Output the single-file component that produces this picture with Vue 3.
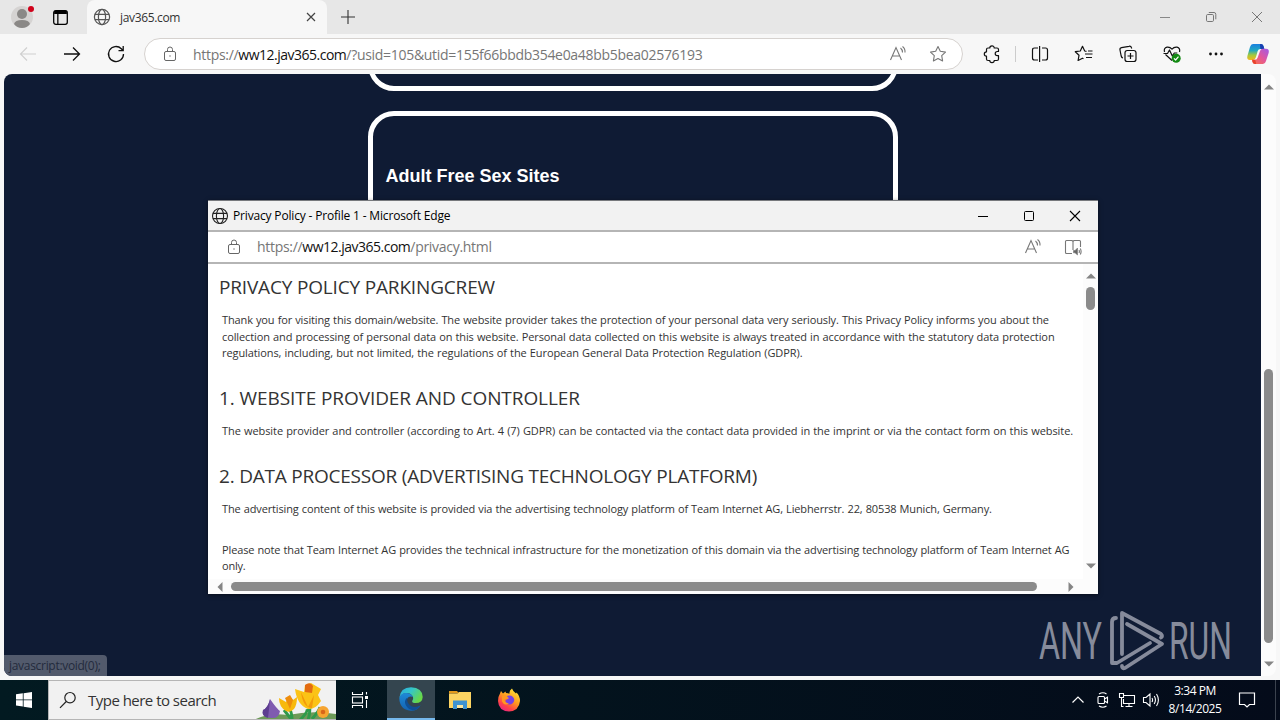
<script setup>
import { ref } from 'vue';

const tabTitle = ref('jav365.com');
const popupTitle = ref('Privacy Policy - Profile 1 - Microsoft Edge');

const adresse = { scheme: 'https://', host: 'ww12.jav365.com' };
const pagePath = '/?usid=105&utid=155f66bbdb354e0a48bb5bea02576193';
const popupPath = '/privacy.html';

// ls = letter spacing of the line, in px
const sections = [
  {
    title: 'PRIVACY POLICY PARKINGCREW',
    ls: -0.17,
    paragraphs: [
      [
        { text: 'Thank you for visiting this domain/website. The website provider takes the protection of your personal data very seriously. This Privacy Policy informs you about the', ls: -0.12 },
        { text: 'collection and processing of personal data on this website. Personal data collected on this website is always treated in accordance with the statutory data protection', ls: -0.1 },
        { text: 'regulations, including, but not limited, the regulations of the European General Data Protection Regulation (GDPR).', ls: -0.09 }
      ]
    ]
  },
  {
    title: '1. WEBSITE PROVIDER AND CONTROLLER',
    ls: -0.08,
    paragraphs: [
      [
        { text: 'The website provider and controller (according to Art. 4 (7) GDPR) can be contacted via the contact data provided in the imprint or via the contact form on this website.', ls: -0.07 }
      ]
    ]
  },
  {
    title: '2. DATA PROCESSOR (ADVERTISING TECHNOLOGY PLATFORM)',
    ls: -0.22,
    paragraphs: [
      [
        { text: 'The advertising content of this website is provided via the advertising technology platform of Team Internet AG, Liebherrstr. 22, 80538 Munich, Germany.', ls: -0.132 }
      ],
      [
        { text: 'Please note that Team Internet AG provides the technical infrastructure for the monetization of this domain via the advertising technology platform of Team Internet AG', ls: -0.13 },
        { text: 'only.', ls: -0.2 }
      ]
    ]
  }
];
</script>

<template>
  <div class="desktop">
    <!-- Tab strip -->
    <header class="tabstrip">
      <svg class="avatar" width="26" height="26" viewBox="0 0 26 26">
        <circle cx="13" cy="14" r="11" fill="#d5d3d2" />
        <circle cx="13" cy="11" r="5" fill="#8a8886" />
        <path d="M5 21q1-4 8-4t8 4q-3 4-8 4t-8-4z" fill="#8a8886" />
        <circle cx="22" cy="6" r="3" fill="#d0021b" />
      </svg>
      <svg class="workspaces" width="17" height="17" viewBox="0 0 16 16" fill="none" stroke="#000">
        <rect x="1.6" y="1.6" width="12.8" height="12.8" rx="2" stroke-width="1.2" />
        <path d="M2 3.2h12" stroke-width="3" />
        <path d="M5.5 4v10" stroke-width="1.2" />
      </svg>
      <div class="tab">
        <svg width="18" height="18" viewBox="0 0 18 18" fill="none" stroke="#555" stroke-width="1.2">
          <circle cx="9" cy="9" r="7.6" />
          <ellipse cx="9" cy="9" rx="3.6" ry="7.6" />
          <path d="M2 6.4h14M2 11.6h14" />
        </svg>
        <span class="tab-title">{{ tabTitle }}</span>
        <svg width="10" height="10" viewBox="0 0 10 10" stroke="#444" stroke-width="1.2"><path d="M1 1l8 8M9 1l-8 8" /></svg>
      </div>
      <svg class="new-tab" width="14" height="14" viewBox="0 0 14 14" stroke="#333" stroke-width="1.1"><path d="M7 0v14M0 7h14" /></svg>
      <div class="caption">
        <svg width="12" height="12" viewBox="0 0 12 12" stroke="#888"><path d="M1 6.5h10" /></svg>
        <svg width="12" height="12" viewBox="0 0 12 12" fill="none" stroke="#777">
          <rect x="1.5" y="3.5" width="7" height="7" rx="1.2" />
          <path d="M3.8 1.5h5.2a1.8 1.8 0 0 1 1.8 1.8v5" />
        </svg>
        <svg width="12" height="12" viewBox="0 0 12 12" stroke="#777"><path d="M1 1l10 10M11 1L1 11" /></svg>
      </div>
    </header>

    <!-- Toolbar -->
    <div class="toolbar">
      <div class="nav-icons">
        <svg width="20" height="20" viewBox="0 0 20 20" fill="none" stroke="#cfcfcf" stroke-width="1.1"><path d="M18 10H2.5M9 3.5L2.5 10 9 16.5" /></svg>
        <svg width="20" height="20" viewBox="0 0 20 20" fill="none" stroke="#111" stroke-width="1.3"><path d="M2 10h15.5M11 3.5l6.5 6.5-6.5 6.5" /></svg>
        <svg width="20" height="20" viewBox="0 0 20 20" fill="none" stroke="#111" stroke-width="1.3"><path d="M17.5 10a7.5 7.5 0 1 1-2.2-5.3l1.7 1.8M17.2 2v4.7h-4.7" /></svg>
      </div>
      <div class="omnibox">
        <svg class="lock" width="14" height="16" viewBox="0 0 14 16" fill="none" stroke="#666">
          <rect x="1.5" y="5.5" width="11" height="9" rx="1.5" />
          <path d="M4.5 5.5v-2a2.5 2.5 0 0 1 5 0v2" />
          <circle cx="7" cy="10" r=".7" fill="#666" stroke="none" />
        </svg>
        <span class="url">{{ adresse.scheme }}<b>{{ adresse.host }}</b>{{ pagePath }}</span>
        <svg class="read" width="18" height="18" viewBox="0 0 18 18" fill="none" stroke="#777" stroke-width="1.1">
          <path d="M1.500 15L7 2.500 12.500 15M3.500 11h7M11.500 3q2 1.500 2 4.500M13.500 1.500q2.800 2 2.500 6" />
        </svg>
        <svg width="18" height="18" viewBox="0 0 18 18" fill="none" stroke="#777" stroke-width="1.1" stroke-linejoin="round">
          <path d="M9 1.600l2.300 4.700 5.200.8-3.800 3.600.9 5.200L9 13.500l-4.600 2.400.9-5.200L1.500 7.100l5.200-.8z" />
        </svg>
      </div>
      <svg class="puzzle" width="20" height="20" viewBox="0 0 20 20" fill="none" stroke="#111" stroke-width="1.2" stroke-linejoin="round">
        <path d="M6 4h1.800a2.200 2.200 0 0 1 4.400 0H15q1.500 0 1.500 1.500v2h-1.200a1.900 1.900 0 0 0 0 4.200h1.200v3.300q0 1.500-1.500 1.500h-2.800a2.200 2.200 0 0 1-4.400 0H6q-1.500 0-1.500-1.500v-2.800a2.200 2.200 0 0 1 0-4.400V5.500Q4.500 4 6 4z" />
      </svg>
      <i class="sep"></i>
      <div class="tool-icons">
        <svg width="20" height="20" viewBox="0 0 20 20" fill="none" stroke="#111" stroke-width="1.2">
          <path d="M8 4H4.500Q2.500 4 2.500 6v8q0 2 2 2H8M12 4h3.500q2 0 2 2v8q0 2-2 2H12M9.600 2v16" />
        </svg>
        <svg width="20" height="20" viewBox="0 0 20 20" fill="none" stroke="#111" stroke-width="1.2" stroke-linejoin="round">
          <path d="M12.500 7.300L10.700 7 8.500 2.300 6.300 7l-5 .7 3.700 3.600-.9 5.200 4.400-2.300 1 .5M11 10h7.500M14 7h4.500M12 13.500h6" />
        </svg>
        <svg width="20" height="20" viewBox="0 0 20 20" fill="none" stroke="#111" stroke-width="1.2">
          <rect x="7" y="6.500" width="11" height="11" rx="2.300" />
          <path d="M12.500 9v6M9.500 12h6M5 14q-1.400-.3-1.800-2L2 6q-.4-2 1.500-2.400L11 2.300q2-.4 2.500 1.500l.2.700" />
        </svg>
        <svg width="20" height="20" viewBox="0 0 20 20" fill="none" stroke="#111" stroke-width="1.2" stroke-linejoin="round">
          <path d="M10 16.500L3.500 10.500M2.500 8Q1.500 4 5 3.200 8 2.800 10 5.200q2-2.400 5-2 3.500 1 2.500 4.800M1.500 9.500h4l2-3.500 2.800 6 2-3h3" />
          <circle cx="14.200" cy="14.300" r="4.500" fill="#138a13" stroke="none" />
          <path d="M12 14.300l1.600 1.700 2.900-3.300" stroke="#fff" />
        </svg>
        <svg width="20" height="20" viewBox="0 0 20 20" fill="#111"><circle cx="4.500" cy="10" r="1.400" /><circle cx="10" cy="10" r="1.400" /><circle cx="15.500" cy="10" r="1.400" /></svg>
      </div>
      <svg class="copilot" width="24" height="24" viewBox="0 0 24 24">
        <defs>
          <linearGradient id="cpA" x1="0" y1="0" x2="0" y2="1">
            <stop offset="0" stop-color="#1a7fe0" /><stop offset=".4" stop-color="#20a9c0" /><stop offset=".7" stop-color="#a5c93c" /><stop offset="1" stop-color="#f5b81d" />
          </linearGradient>
          <linearGradient id="cpB" x1="1" y1="0" x2="0" y2="1">
            <stop offset="0" stop-color="#a05be8" /><stop offset=".5" stop-color="#e3579b" /><stop offset="1" stop-color="#fb7440" />
          </linearGradient>
        </defs>
        <path d="M7 2h8q1.800 0 2.500 2l.8 3h-4q-2 0-2.600 2L10 15q-.8 3-3 3H4q-3.500 0-2.600-4L4 5q.8-3 3-3z" fill="url(#cpA)" />
        <path d="M14 2h1q1.800 0 2.500 2l.8 3h-4z" fill="#183fb0" />
        <path d="M17 22H9q-1.800 0-2.500-2L6 17.800h3q2 0 2.700-2.300L14 9q.7-2.200 3-2.200h3q3.500 0 2.700 4L20 19q-.8 3-3 3z" fill="url(#cpB)" />
        <path d="M6.200 17.800h3l1 4.200H9q-1.800 0-2.500-2z" fill="#e8412c" />
      </svg>
    </div>

    <!-- Page -->
    <main class="page">
      <div class="viewport">
        <div class="block block-top"></div>
        <div class="block block-main">
          <h2>Adult Free Sex Sites</h2>
        </div>
      </div>
      <div class="scroll-v">
        <svg width="10" height="6" viewBox="0 0 10 6"><path d="M0 5.500L5 .5l5 5z" fill="#858585" /></svg>
        <i class="thumb"></i>
        <svg width="10" height="6" viewBox="0 0 10 6"><path d="M0 .5l5 5 5-5z" fill="#858585" /></svg>
      </div>
      <div class="status">javascript:void(0);</div>
    </main>

    <!-- Taskbar -->
    <footer class="taskbar">
      <div class="start">
        <svg width="16" height="16" viewBox="0 0 16 16" fill="#fff"><path d="M0 2.200l6.800-.9v6.200H0zM7.600 1.200L16 0v7.500H7.600zM0 8.300h6.800v6.200L0 13.600zM7.600 8.300H16V16l-8.400-1.200z" /></svg>
      </div>
      <div class="search">
        <svg class="loupe" width="18" height="18" viewBox="0 0 18 18" fill="none" stroke="#222" stroke-width="1.2"><circle cx="11" cy="6.700" r="5.200" /><path d="M7.300 10.500L1 16.800" /></svg>
        <span>Type here to search</span>
        <svg class="flowers" width="82" height="39" viewBox="0 0 82 39">
          <path d="M0 39q14-8 34-5 24-5 48-1v6z" fill="#6d9a58" />
          <path d="M56 22q0 12-2 17M46 39q8-8 7-11M37 38l-7-9M38 38q0-8-4-12M58 38q7-8 8-12" stroke="#2f9a4b" stroke-width="3" fill="none" />
          <path d="M16 18q7 10 10 12-1 8-9 7-10-1-8-8 5-2 7-11z" fill="#7f5bb0" />
          <path d="M16 18q-1 11-2 19-7-2-5-8 5-2 7-11z" fill="#5d3d90" />
          <path d="M25 17l7 4 3-6 4 4 4-3q0 8-3 12-4 4-8 2-7-4-7-13z" fill="#f8b90c" />
          <path d="M31 17l5-3 3 5-3 9z" fill="#ee8d0c" />
          <path d="M41 8l9 3 1-7 6-2 5 3 5 3-3 6 3 6q-6 9-13 8-11-4-13-20z" fill="#fbc316" />
          <path d="M47 11l7 15 6-12-2 13q-9 0-11-16z" fill="#f39a0b" />
          <path d="M51 4q5-4 8 1l-1 7-7-1z" fill="#e36b12" />
          <circle cx="69" cy="31" r="6" fill="#f6a531" /><circle cx="69" cy="31" r="2.300" fill="#d9661a" />
        </svg>
      </div>
      <div class="task taskview">
        <svg width="18" height="16" viewBox="0 0 18 16" fill="none" stroke="#fff" stroke-width="1.100">
          <path d="M1.500 0v2.500h10V0M1.500 16v-2.500h10V16M15.500 0v2.500M15.500 8v8" /><rect x="1.500" y="5" width="10" height="6" /><path d="M14 5.500h3" stroke-width="3" />
        </svg>
      </div>
      <div class="task active">
        <svg width="24" height="24" viewBox="0 0 24 24">
          <defs>
            <linearGradient id="edA" x1="0" y1="0" x2="1" y2=".5"><stop offset="0" stop-color="#2aa9e0" /><stop offset=".5" stop-color="#35c6c8" /><stop offset="1" stop-color="#68d948" /></linearGradient>
            <linearGradient id="edB" x1="0" y1="0" x2="0" y2="1"><stop offset="0" stop-color="#1e8ad8" /><stop offset="1" stop-color="#1462b0" /></linearGradient>
          </defs>
          <path d="M.3 11Q1.500.3 12 .3 23.500 1 23.700 10q-.3 6-7 6-4 0-3.500-2 1.500-1.500.8-4-2-4.500-7-4-4.500.5-6.700 5z" fill="url(#edA)" />
          <path d="M.3 11Q2 6 7 6q5 0 7 4-4-1.500-6 2-1.500 5 3 8 5 2.500 10.500-1.500-4 6-10 5.300Q.5 22.500.3 11z" fill="url(#edB)" />
          <path d="M8.500 10.500q-4 3-1.800 7.500 2.300 4.700 8 5.300Q19 22.500 21.500 18.500q-5 2.500-9.500.5-5-3-3.500-8.500z" fill="#104f94" />
        </svg>
      </div>
      <div class="task explorer">
        <svg width="22" height="20" viewBox="0 0 22 20">
          <path d="M0 1h8l2 2.500H0z" fill="#e39a1b" />
          <path d="M0 3.500h8.500L10 2h12v16H0z" fill="#fcd462" />
          <path d="M4 10.500h14V19h-4v-4H8v4H4z" fill="#3d92d1" />
          <path d="M8 15h6v3H8z" fill="#fbe6a0" />
        </svg>
      </div>
      <div class="task">
        <svg width="24" height="24" viewBox="0 0 24 24">
          <defs>
            <linearGradient id="ffA" x1=".8" y1="0" x2=".2" y2="1"><stop offset="0" stop-color="#ffe83a" /><stop offset=".45" stop-color="#ff9a1f" /><stop offset=".75" stop-color="#ff4348" /><stop offset="1" stop-color="#e61f8b" /></linearGradient>
          </defs>
          <path d="M3 5.500L4 3l2 2.500 2.500-2L9 5q2 0 3.500.7Q12 2.500 15 .5q1 3 4 5l.5-1Q23 8 23 13q-1 10-11 10.500Q1.500 23 1 13q0-4.500 2-7.500z" fill="url(#ffA)" />
          <path d="M9 8.500q4-2 7 .5 2.500 3 0 6-3.500 3-7 0-1.500-2 .5-3.500 1.500-.5 2.500-1.500z" fill="#7542e5" />
          <path d="M5 8q3-2 6 1-1 2-3.500 2.500Q8 15 12 15.500q-5 2.500-7-2z" fill="#ff9820" />
        </svg>
      </div>
      <div class="tray">
        <svg width="14" height="16" viewBox="0 0 14 16" fill="none" stroke="#fff" stroke-width="1.2"><path d="M1.500 10.500L7 5l5.500 5.500" /></svg>
        <svg class="camera" width="14" height="16" viewBox="0 0 14 16" fill="none" stroke="#fff" stroke-width="1.1"><rect x="2" y="4.500" width="6.500" height="7" rx="1" /><path d="M8.500 7l3-1.800v5.600L8.500 9M3 2q4-2.500 7.500 0M3 14q4 2.500 7.500 0" /></svg>
        <svg width="18" height="16" viewBox="0 0 18 16" fill="none" stroke="#fff" stroke-width="1.1"><path d="M6 3.500h10.500v8H5.500V7M11 11.500V14.500M7.500 14.500h7" /><path d="M1.500 1.500h4v4h-4zM3.500 5.500v9h2" /></svg>
        <svg class="volume" width="18" height="16" viewBox="0 0 18 16" fill="none" stroke="#fff" stroke-width="1.1"><path d="M1.500 5.500H4L8 2v12l-4-3.500H1.500zM10 6q1.200 2 0 4M12.200 4q2.500 4 0 8M14.500 2q3.800 6 0 12" /></svg>
      </div>
      <div class="clock">
        <span>3:34 PM</span>
        <span>8/14/2025</span>
      </div>
      <svg class="notif" width="18" height="18" viewBox="0 0 18 18" fill="none" stroke="#fff" stroke-width="1.2"><path d="M1.500 2h15v11.500h-5L9 16l-2.500-2.500h-5z" /></svg>
      <i class="peek"></i>
    </footer>

    <!-- Popup window -->
    <section class="popup">
      <div class="popup-title">
        <svg width="18" height="18" viewBox="0 0 18 18" fill="none" stroke="#222" stroke-width="1.1">
          <circle cx="9" cy="9" r="7.500" /><ellipse cx="9" cy="9" rx="3.600" ry="7.500" /><path d="M2 6.400h14M2 11.600h14" />
        </svg>
        <span>{{ popupTitle }}</span>
        <div class="popup-caption">
          <svg width="12" height="12" viewBox="0 0 12 12" stroke="#000"><path d="M1 6.500h10" /></svg>
          <svg width="12" height="12" viewBox="0 0 12 12" fill="none" stroke="#000"><rect x="1.500" y="1.500" width="9" height="9" rx="1" /></svg>
          <svg width="12" height="12" viewBox="0 0 12 12" stroke="#000" stroke-width="1.1"><path d="M1 1l10 10M11 1L1 11" /></svg>
        </div>
      </div>
      <div class="popup-bar">
        <svg class="lock" width="14" height="16" viewBox="0 0 14 16" fill="none" stroke="#666">
          <rect x="1.500" y="5.500" width="11" height="9" rx="1.500" />
          <path d="M4.500 5.500v-2a2.500 2.500 0 0 1 5 0v2" />
          <circle cx="7" cy="10" r=".7" fill="#666" stroke="none" />
        </svg>
        <span class="url">{{ adresse.scheme }}<b>{{ adresse.host }}</b>{{ popupPath }}</span>
        <svg class="read" width="18" height="18" viewBox="0 0 18 18" fill="none" stroke="#777" stroke-width="1.1">
          <path d="M1.500 15L7 2.500 12.500 15M3.500 11h7M11.500 3q2 1.500 2 4.500M13.500 1.500q2.800 2 2.500 6" />
        </svg>
        <svg width="18" height="18" viewBox="0 0 18 18" fill="none" stroke="#777" stroke-width="1.1">
          <path d="M8 15.500H2.500q-1 0-1-1v-11q0-1 1-1H8L9 3.500l1-1h5.500q1 0 1 1V9M9 3.500V12" />
          <path d="M9.500 12.500H11l2.500-2.500v7L11 14.800H9.500z" fill="#666" stroke-width=".6" />
          <path d="M15 12q.8 1.500 0 3M16.300 10.500q1.600 3 0 6" />
        </svg>
      </div>
      <div class="popup-body">
        <div class="doc">
          <article v-for="section in sections" :key="section.title">
            <h3 :style="{ letterSpacing: section.ls + 'px' }">{{ section.title }}</h3>
            <p v-for="(lines, i) in section.paragraphs" :key="i">
              <span v-for="line in lines" :key="line.text" :style="{ letterSpacing: line.ls + 'px' }">{{ line.text }}</span>
            </p>
          </article>
        </div>
        <div class="popup-scroll-v">
          <svg width="10" height="6" viewBox="0 0 10 6"><path d="M0 5.500L5 .5l5 5z" fill="#858585" /></svg>
          <i class="thumb"></i>
          <svg class="down" width="10" height="6" viewBox="0 0 10 6"><path d="M0 .5l5 5 5-5z" fill="#858585" /></svg>
        </div>
      </div>
      <div class="popup-scroll-h">
        <svg width="6" height="10" viewBox="0 0 6 10"><path d="M5.500 0L.5 5l5 5z" fill="#858585" /></svg>
        <i class="thumb"></i>
        <svg width="6" height="10" viewBox="0 0 6 10"><path d="M.5 0l5 5-5 5z" fill="#858585" /></svg>
      </div>
    </section>

    <!-- Watermark -->
    <svg class="watermark" width="210" height="74" viewBox="0 0 210 74">
      <g class="mark-text">
        <text x="4" y="53" textLength="63" lengthAdjust="spacingAndGlyphs">ANY</text>
        <text x="134" y="53" textLength="63" lengthAdjust="spacingAndGlyphs">RUN</text>
      </g>
      <g fill="none" stroke="#868b9b" stroke-width="3.8" stroke-linejoin="round" stroke-linecap="round">
        <path d="M81 12q-4 0-4 4v41h5l33-20" />
        <path d="M87 48V7L126 28q2 2 0 3.500" />
        <path d="M92 18l35 20L90 62q-3 1-3-2" />
      </g>
    </svg>
  </div>
</template>

<style>
body { background: #f7f7f7; overflow: hidden; }
</style>

<style scoped>
.desktop { position: relative; width: 1280px; height: 720px; display: flex; flex-direction: column; background: #f7f7f7; font-family: "Open Sans", "Noto Sans", sans-serif; overflow: hidden; }
svg { display: block; flex: none; }
.desktop span { white-space: pre; }

/* Tab strip */
.tabstrip { height: 34px; display: flex; align-items: center; background: #e7e7e7; }
.avatar { margin-left: 9px; margin-top: -2px; }
.workspaces { margin-left: 17px; }
.tab { width: 240px; height: 34px; box-sizing: border-box; margin-left: 18px; padding: 0 11px 0 6px; display: flex; align-items: center; background: #f7f7f7; border-radius: 8px 8px 0 0; }
.tab-title { flex: 1; margin-left: 9px; font-size: 12px; letter-spacing: -0.35px; color: #333; }
.new-tab { margin-left: 14px; }
.caption { margin-left: auto; margin-right: 17px; display: flex; gap: 34px; }

/* Toolbar */
.toolbar { height: 40px; display: flex; align-items: center; background: #f7f7f7; }
.nav-icons { display: flex; gap: 24px; margin-left: 18px; }
.omnibox { width: 819px; height: 32px; box-sizing: border-box; margin-left: 18px; padding: 0 15px 0 18px; display: flex; align-items: center; background: #fff; border: 1px solid #d6d2cf; border-radius: 16px; }
.url { flex: 1; font-size: 14px; letter-spacing: -0.3px; color: #767676; }
.url b { font-weight: 400; letter-spacing: -0.5px; color: #111; }
.omnibox .url { margin-left: 16px; }
.read { margin-right: 22px; }
.puzzle { margin-left: 19px; }
.sep { width: 1px; height: 16px; margin: 0 14px 0 13px; background: #ccc; }
.tool-icons { display: flex; gap: 24px; }
.copilot { margin-left: 20px; }

/* Page */
.page { position: relative; height: 602px; margin: 0 4px; display: flex; border-radius: 8px; overflow: hidden; }
.viewport { width: 1257px; display: flex; flex-direction: column; align-items: center; background: #0f1b34; }
.block { width: 530px; box-sizing: border-box; border: 5px solid #fff; border-radius: 26px; flex: none; }
.block-top { height: 60px; margin-top: -43px; }
.block-main { height: 420px; margin-top: 20px; padding: 48px 13px; }
.block-main h2 { margin: 0; font: bold 18px/24px "Liberation Sans", sans-serif; color: #fff; }
.scroll-v { width: 15px; box-sizing: border-box; padding: 10px 0 9px; display: flex; flex-direction: column; align-items: center; background: #fcfcfc; }
.thumb { display: block; background: #8b8b8b; border-radius: 5px; flex: none; }
.scroll-v .thumb { width: 9px; height: 274px; margin-top: 279px; margin-bottom: 18px; }
.status { position: absolute; left: 0; bottom: 0; width: 103px; height: 21px; box-sizing: border-box; padding-left: 5px; background: #525a6c; border-radius: 0 4px 0 0; font-size: 12px; line-height: 21px; letter-spacing: -0.3px; color: #232a3c; }

/* Taskbar */
.taskbar { height: 40px; margin-top: 4px; display: flex; align-items: center; background: linear-gradient(90deg, #021a21, #03131d 45%, #040b1a); color: #fff; }
.start { width: 48px; display: flex; justify-content: center; }
.search { width: 288px; height: 40px; box-sizing: border-box; display: flex; align-items: center; background: #f1f1f1; border: 1px solid #b5b5b5; border-right: 0; overflow: hidden; }
.loupe { margin-left: 10px; }
.search span { flex: 1; margin-left: 11px; font-size: 15px; letter-spacing: -0.52px; color: #333; }
.task { width: 48px; height: 40px; display: flex; align-items: center; justify-content: center; }
.taskview { width: 48px; padding-right: 3px; }
.task.active { box-sizing: border-box; background: #34454f; border-bottom: 2px solid #76b9ed; }
.explorer { margin: 0 1px; }
.tray { margin-left: auto; display: flex; align-items: center; gap: 8px; }
.camera { margin-left: 3px; }
.volume { margin-left: -2px; }
.clock { width: 64px; margin-left: 3px; display: flex; flex-direction: column; align-items: center; font-size: 12px; line-height: 18px; letter-spacing: -0.45px; }
.notif { margin-left: 11px; }
.peek { width: 1px; height: 40px; margin: 0 4px 0 19px; background: #3b424e; }

/* Popup window */
.popup { position: absolute; left: 208px; top: 200px; width: 890px; height: 394px; display: flex; flex-direction: column; background: #fff; box-shadow: 0 1px 4px rgba(0, 0, 0, 0.5); }
.popup-title { height: 32px; box-sizing: border-box; padding: 0 17px 0 3px; display: flex; align-items: center; background: #f2f2f2; border-top: 1px solid #77797d; border-bottom: 2px solid #b5b5b5; font-size: 12px; color: #000; }
.popup-title span { margin-left: 4px; letter-spacing: -0.17px; }
.popup-caption { margin-left: auto; display: flex; gap: 34px; }
.popup-bar { height: 32px; box-sizing: border-box; padding: 0 16px 0 19px; display: flex; align-items: center; border-bottom: 2px solid #b5b5b5; }
.popup-bar .url { margin-left: 16px; line-height: 18px; }
.popup-body { flex: 1; min-height: 0; display: flex; }
.doc { flex: 1; padding: 11px 0 0 11px; color: #333; overflow: hidden; }
.doc article { margin-bottom: 24.6px; }
.doc h3 { margin: 0 0 13px; font-size: 19px; font-weight: 400; line-height: 24px; white-space: nowrap; }
.doc p { margin: 0 0 24.2px 3px; font-size: 11px; line-height: 16.5px; word-spacing: 0.4px; }
.doc p:last-child { margin-bottom: 0; }
.doc p span { display: block; }
.popup-scroll-v { width: 15px; display: flex; flex-direction: column; align-items: center; padding-top: 9px; background: #fcfcfc; }
.popup-scroll-v .thumb { width: 9px; height: 23px; margin-top: 8px; }
.popup-scroll-v .down { margin-top: auto; margin-bottom: 10px; }
.popup-scroll-h { height: 15px; padding-left: 9px; display: flex; align-items: center; background: #fcfcfc; }
.popup-scroll-h .thumb { width: 806px; height: 9px; margin: 0 31px 0 8px; }

.watermark { position: absolute; left: 1035px; top: 606px; overflow: visible; pointer-events: none; }
.mark-text { font-family: Roboto, sans-serif; font-size: 51px; font-weight: 400; fill: #868b9b; }
</style>
